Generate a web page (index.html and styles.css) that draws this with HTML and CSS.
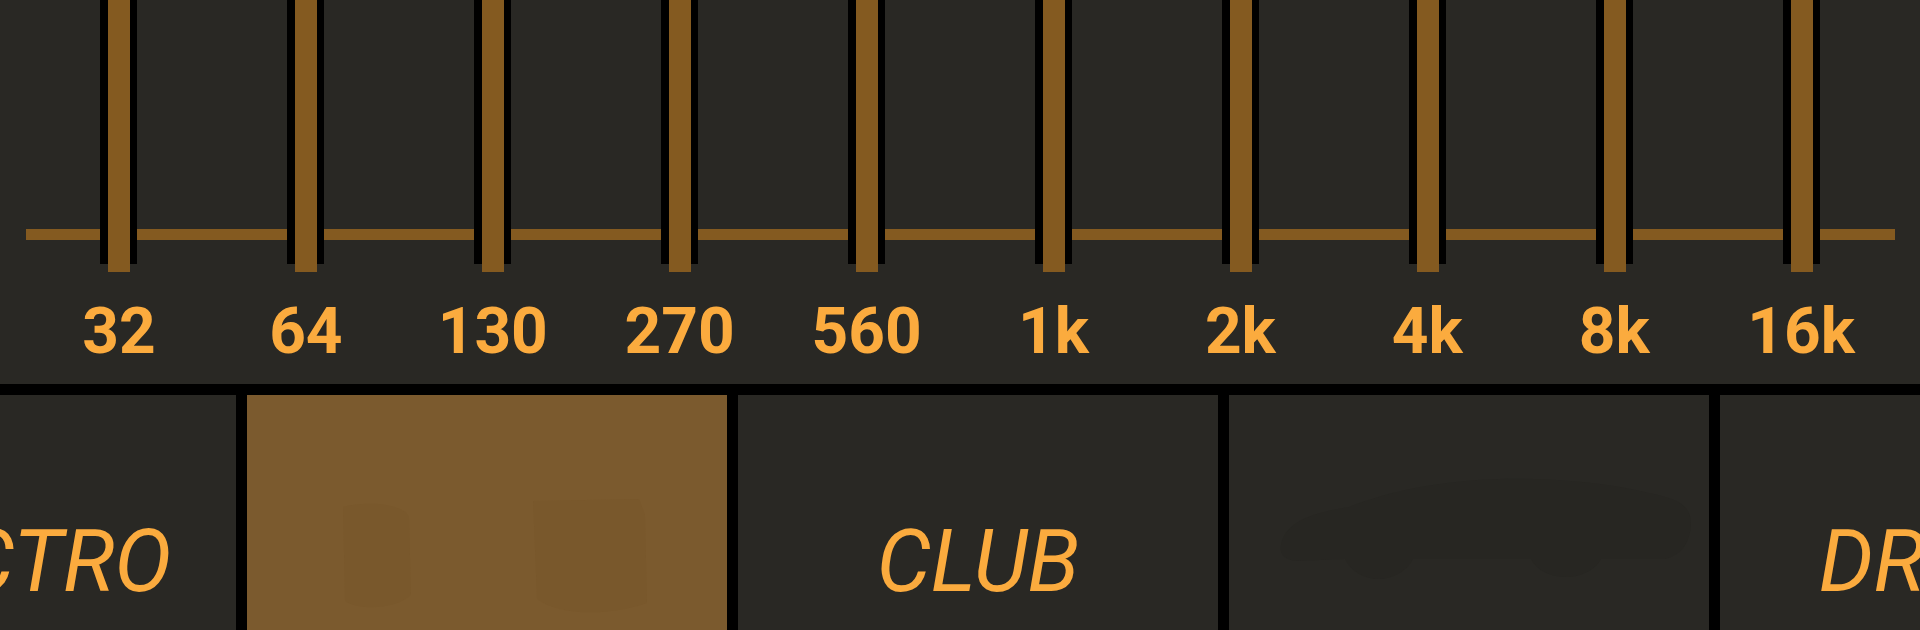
FILE: index.html
```html
<!DOCTYPE html>
<html lang="en">
<head>
<meta charset="utf-8">
<title>Equalizer</title>
<link rel="stylesheet" href="styles.css">
</head>
<body>
<div class="app">
  <section class="eq">
    <div class="bands">
      <div class="band"><div class="slider"><span class="thumb"></span></div><div class="freq">32</div></div>
      <div class="band"><div class="slider"><span class="thumb"></span></div><div class="freq">64</div></div>
      <div class="band"><div class="slider"><span class="thumb"></span></div><div class="freq">130</div></div>
      <div class="band"><div class="slider"><span class="thumb"></span></div><div class="freq">270</div></div>
      <div class="band"><div class="slider"><span class="thumb"></span></div><div class="freq">560</div></div>
      <div class="band"><div class="slider"><span class="thumb"></span></div><div class="freq">1k</div></div>
      <div class="band"><div class="slider"><span class="thumb"></span></div><div class="freq">2k</div></div>
      <div class="band"><div class="slider"><span class="thumb"></span></div><div class="freq">4k</div></div>
      <div class="band"><div class="slider"><span class="thumb"></span></div><div class="freq">8k</div></div>
      <div class="band"><div class="slider"><span class="thumb"></span></div><div class="freq">16k</div></div>
    </div>
  </section>
  <nav class="presets">
    <div class="preset"><span class="name">ELECTRO</span></div>
    <div class="preset active">
      <svg class="icon" width="480" height="237" viewBox="0 0 480 237">
        <path d="M96 112 C118 106 156 108 162 122 L164 200 C150 214 112 216 98 206 Z" fill="#79582c"/>
        <path d="M286 106 L392 104 L398 120 L400 208 C360 222 310 220 290 204 Z" fill="#79582c"/>
      </svg>
    </div>
    <div class="preset"><span class="name">CLUB</span></div>
    <div class="preset">
      <svg class="icon" width="480" height="237" viewBox="0 0 480 237">
        <path d="M52 150 C56 128 80 118 120 112 C160 96 210 86 270 84 C330 82 390 90 420 98 C450 104 462 110 462 130 C460 150 452 160 436 164 L372 164 C366 176 350 182 338 182 C322 182 308 176 302 164 L184 164 C178 176 164 184 150 184 C134 184 122 176 116 164 L66 166 C56 164 50 160 52 150 Z" fill="#272622"/>
      </svg>
    </div>
    <div class="preset"><span class="name">DRUMS</span></div>
  </nav>
</div>
</body>
</html>
```

FILE: styles.css
```css
html, body {
  margin: 0;
  padding: 0;
  background: #000;
}
body {
  width: 1920px;
  height: 630px;
  overflow: hidden;
  font-family: Roboto, "Liberation Sans", sans-serif;
}
.app {
  width: 1920px;
  height: 630px;
  overflow: hidden;
  background: #000;
}
.eq {
  height: 384px;
  background: #292824;
  margin-bottom: 11px;
}
.bands {
  position: relative;
  margin-left: 25.5px;
  width: 1869px;
  display: grid;
  grid-template-columns: repeat(10, 1fr);
}
.bands::before {
  content: "";
  position: absolute;
  left: 0;
  right: 0;
  top: 229px;
  height: 11px;
  background: #845a20;
}
.band {
  display: flex;
  flex-direction: column;
  align-items: center;
  position: relative;
}
.slider {
  width: 37px;
  height: 264px;
  background: #000;
  display: flex;
  justify-content: center;
}
.thumb {
  display: block;
  width: 22px;
  height: 272px;
  background: #845a20;
  margin-left: 1px;
}
.slider + .freq {
  margin-top: 30px;
}
.freq {
  font-weight: 700;
  font-size: 64px;
  line-height: 75px;
  color: #fbab3e;
  letter-spacing: 0;
}
.presets {
  display: flex;
  gap: 11px;
  margin-left: -244px;
  height: 260px;
}
.preset {
  flex: 0 0 480px;
  width: 480px;
  background: #292824;
  position: relative;
  display: flex;
  justify-content: center;
  padding-top: 116px;
  box-sizing: border-box;
}
.preset.active {
  background: #7b5a2e;
}
.name {
  font-style: italic;
  font-weight: 400;
  font-size: 86px;
  line-height: 101px;
  color: #fbab3e;
}
.icon {
  position: absolute;
  left: 0;
  top: 0;
}
```
